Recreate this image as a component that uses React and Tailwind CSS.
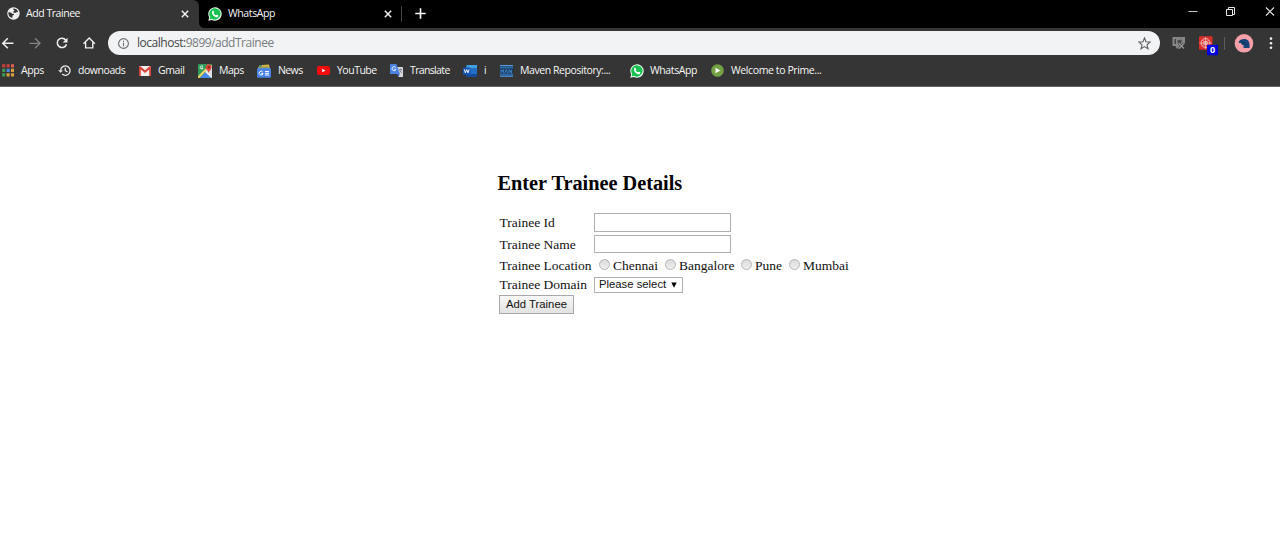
import React from 'react';

function WhatsAppIcon() {
  return (
    <svg className="size-[14px] shrink-0" viewBox="0 0 14 14">
      <path d="M.3 13.8 1.2 10.4A6.7 6.7 0 1 1 3.8 12.9Z" fill="#f2fff4" />
      <path d="M1.6 12.4 2.2 10.1A5.7 5.7 0 1 1 4 11.8Z" fill="#18c250" />
      <path d="M4.6 3.8c.5-.4.9-.2 1.1.4l.4 1c.1.4-.5.8-.5 1 .5 1 1.2 1.6 2.2 2.1.4 0 .8-.8 1.1-.6l1.2.6c.6.3.1 1.5-.5 1.8-1.2.6-2.8-.1-4.1-1.3S3.300 5.200 4.600 3.800Z" fill="#fff" />
    </svg>
  );
}

function GlobeIcon() {
  return (
    <svg className="size-[13px] shrink-0" viewBox="0 0 13 13">
      <circle cx="6.500" cy="6.500" r="6.200" fill="#f1f1f1" />
      <path d="M1.400 5.200c1.800 0 3 .3 3.700 1.500h1.800c.4.900-.2 1.500-1.300 1.700L5.200 11C2.500 10.200 1 8 1.400 5.200ZM6.100 1.500c2.200-.2 4.100 1 5 3-.8.8-1.400.3-1.900.9-.6.7-1.900.1-2.900 0 0-1 .4-1.400 1.100-1.700-.3-1-1.300-1.100-1.300-2.200Z" fill="#353535" />
    </svg>
  );
}

function AppsIcon() {
  const colors = ['#c9403a', '#c9403a', '#d9604f', '#3d9a55', '#4a86e0', '#d7a13a', '#3d9a55', '#d7a13a', '#d7a13a'];
  return (
    <svg className="h-[13px] w-[12px]" viewBox="0 0 12 13">
      {colors.map((c, i) => (
        <rect key={i} x={(i % 3) * 4.4 + 0.2} y={Math.floor(i / 3) * 4.5 + 0.2} width="3.100" height="3.300" fill={c} />
      ))}
    </svg>
  );
}

function HistoryIcon() {
  return (
    <svg className="h-[13px] w-[13px]" viewBox="0 0 13 13" fill="none" stroke="#e8e8e8" strokeWidth="1.300">
      <path d="M2.600 6.500a4.700 4.700 0 1 1 1.500 3.600M7.300 3.700v3l2.200 1.200" />
      <path d="M.2 6.200h4.800L2.600 8.700Z" fill="#e8e8e8" stroke="none" />
    </svg>
  );
}

function GmailIcon() {
  return (
    <svg className="h-[10px] w-[12px]" viewBox="0 0 12 10">
      <rect width="12" height="10" rx=".8" fill="#f3eeee" />
      <path d="M0 10V1c0-.6.5-1 1-1l5 4.300L11 0c.6 0 1 .4 1 1v9h-1.800V3.500L6 6.900 1.800 3.500V10Z" fill="#d8433a" />
    </svg>
  );
}

function MapsIcon() {
  return (
    <svg className="size-[14px]" viewBox="0 0 14 14">
      <rect width="14" height="14" rx="1" fill="#2f9d59" />
      <path d="M8 5.500 14 1v12.500L7 7Z" fill="#dedede" />
      <path d="M2 14 7.500 8l6 6Z" fill="#4a88ee" />
      <path d="M0 12.300 7.500 4.500 9 6 1.400 14H.6Q0 14 0 13.400Z" fill="#f0cf68" />
      <path d="m7.200 7.900.9-.9 5.900 6-.7 1Z" fill="#f5f5f5" />
      <path d="M10.700.3a2.900 2.900 0 0 1 2.900 2.900c0 2.300-2.300 2.900-2.800 6-.5-3.100-3-3.700-3-6A2.900 2.900 0 0 1 10.700.3Z" fill="#dc4638" />
      <circle cx="10.700" cy="3.200" r="1" fill="#7d211c" />
      <path d="M4.900 2.600a1.500 1.500 0 1 0 .2 1.400H3.700" fill="none" stroke="#fff" strokeWidth=".9" />
    </svg>
  );
}

function NewsIcon() {
  return (
    <svg className="h-[14px] w-[14px]" viewBox="0 0 14 14">
      <path d="M2 1h8l-.4 4H2Z" fill="#3b8f5d" />
      <path d="m5 1 7-.6.5 4H4Z" fill="#d6b545" />
      <path d="M1 2.700h12v3H1Z" fill="#8f9b69" />
      <rect x="0" y="4.200" width="14" height="9.600" rx="1" fill="#4a82e8" />
      <path d="M5.700 8A1.900 1.900 0 1 0 6 9.500H4.400M8 7.500h4M8 9.300h4M8 11h4" fill="none" stroke="#fff" strokeWidth="1" />
    </svg>
  );
}

function YouTubeIcon() {
  return (
    <svg className="h-[9px] w-[13px]" viewBox="0 0 12 9" preserveAspectRatio="none">
      <rect width="12" height="9" rx="1.900" fill="#f50b0b" />
      <path d="m4.800 2.700 3.200 1.800-3.200 1.800Z" fill="#fff" />
    </svg>
  );
}

function TranslateIcon() {
  return (
    <svg className="size-[13px]" viewBox="0 0 13 13">
      <path d="M5 3h7.400c.4 0 .6.300.6.600V13H8.500Z" fill="#d7d9dd" />
      <path d="M0 .6C0 .3.300 0 .6 0h5.900l3.300 10H.6a.6.6 0 0 1-.6-.6Z" fill="#4a82e2" />
      <path d="m6.800 10 2.900 0-1.200 3Z" fill="#3260b5" />
      <path d="M5.700 3.500A2 2 0 1 0 6 5.300H4.300" fill="none" stroke="#fff" strokeWidth=".9" />
      <path d="M8.800 5.500H12M10.400 4.600v1M11.500 5.500c-.3 1.500-1 2.400-1.900 3M9.500 6.500l2.300 2.600" fill="none" stroke="#65717d" strokeWidth=".7" />
    </svg>
  );
}

function WordIcon() {
  return (
    <svg className="h-[12px] w-[14px]" viewBox="0 0 14 12">
      <rect x="3.500" width="10.500" height="12" rx=".7" fill="#246fc5" />
      <path d="M3.500 0H14v3H3.500Z" fill="#409fe2" />
      <path d="M3.500 9H14v3H3.500Z" fill="#174a98" />
      <rect y="2.500" width="7.500" height="7.300" rx=".6" fill="#1756b0" />
      <path d="m1.300 4.300 1.100 3.500 1.300-3.200L5 7.800l1.200-3.500" fill="none" stroke="#fff" strokeWidth=".9" />
    </svg>
  );
}

function MavenIcon() {
  return (
    <svg className="h-[12px] w-[13px]" viewBox="0 0 13 12">
      <rect width="13" height="12" fill="#17385e" />
      <path d="M0 .7h13M0 11.100h13" stroke="#5a9add" strokeWidth="1.300" />
      <path d="M0 2.800h13M0 9.100h13" stroke="#3b80c9" strokeWidth="1" />
      <path d="M1 7.900V4.600l1.300 2 1.300-2v3.300M5 7.900l1.300-3.300 1.300 3.300M9 7.900V4.600l2.400 3.300V4.600" fill="none" stroke="#4d91d7" strokeWidth=".8" />
    </svg>
  );
}

function PrimeIcon() {
  return (
    <svg className="size-[13px]" viewBox="0 0 13 13">
      <circle cx="6.500" cy="6.500" r="6.300" fill="#73a143" />
      <path d="m4.500 3.700 5 2.800-5 2.800Z" fill="#fff" />
    </svg>
  );
}

const bookmarks = [
  { label: 'Apps', Icon: AppsIcon, size: 'w-[56px]', slot: 'w-[19px]', font: 'tracking-[-0.39px]' },
  { label: 'downoads', Icon: HistoryIcon, size: 'w-[81px]', slot: 'w-[20px]', font: 'tracking-[-0.45px]' },
  { label: 'Gmail', Icon: GmailIcon, size: 'w-[59px]', slot: 'w-[19px]', font: 'tracking-[-0.39px]' },
  { label: 'Maps', Icon: MapsIcon, size: 'w-[59px]', slot: 'w-[21px]', font: 'tracking-[-0.5px]' },
  { label: 'News', Icon: NewsIcon, size: 'w-[60px]', slot: 'w-[21px]', font: 'tracking-[-0.6px]' },
  { label: 'YouTube', Icon: YouTubeIcon, size: 'w-[73px]', slot: 'w-[20px]', font: 'tracking-[-0.5px]' },
  { label: 'Translate', Icon: TranslateIcon, size: 'w-[73px]', slot: 'w-[20px]', font: 'tracking-[-0.65px]' },
  { label: 'i', Icon: WordIcon, size: 'w-[37px]', slot: 'w-[21px]', font: 'tracking-[-0.39px]' },
  { label: 'Maven Repository:...', Icon: MavenIcon, size: 'w-[130px]', slot: 'w-[20px]', font: 'tracking-[-0.43px]' },
  { label: 'WhatsApp', Icon: WhatsAppIcon, size: 'w-[81px]', slot: 'w-[20px]', font: 'tracking-[-0.39px]' },
  { label: 'Welcome to Prime...', Icon: PrimeIcon, size: 'w-[130px]', slot: 'w-[20px]', font: 'tracking-[-0.39px]' },
];

function CloseIcon() {
  return (
    <svg className="size-[8px] shrink-0" viewBox="0 0 8 8" stroke="#f4f4f4" strokeWidth="1.400">
      <path d="m.8.8 6.400 6.400M7.200.8.8 7.200" />
    </svg>
  );
}

function TabStrip() {
  return (
    <div className="flex h-7 bg-black text-[10.5px] tracking-[-0.45px] text-[#f5f5f5]">
      <div className="flex w-[199px] items-center rounded-tr-[6px] bg-[#353535] pb-px pl-[7px] pr-[10px]">
        <GlobeIcon />
        <span className="ml-[6px] flex-1">Add Trainee</span>
        <CloseIcon />
      </div>
      <svg className="mt-auto size-[6px] shrink-0" viewBox="0 0 6 6">
        <path d="M0 0v6h6Q0 6 0 0Z" fill="#353535" />
      </svg>
      <div className="flex w-[196px] items-center pb-px pl-[3px] pr-[9px]">
        <WhatsAppIcon />
        <span className="ml-[6px] flex-1 tracking-[-0.39px]">WhatsApp</span>
        <CloseIcon />
      </div>
      <div className="mt-[6px] h-4 w-px bg-[#454545]" />
      <svg className="ml-[13px] mt-[8px] size-[11px]" viewBox="0 0 11 11" stroke="#fff" strokeWidth="1.600">
        <path d="M5.500.3v10.400M.3 5.500h10.400" />
      </svg>
      <svg className="ml-auto h-[24px] w-[92px]" viewBox="0 0 92 24" fill="none" stroke="#e8e8e8" strokeWidth="1">
        <path d="M.5 11.500h9" stroke="#c8c8c8" />
        <path d="M38.500 9.500h6v6h-6zM40.500 9.500v-2h6v7h-2" />
        <path d="m78 7.500 8 8M86 7.500l-8 8" strokeWidth="1.100" />
      </svg>
    </div>
  );
}

function Toolbar() {
  return (
    <div className="flex h-[30px] items-center">
      <svg className="h-[30px] w-[108px] shrink-0" viewBox="0 0 108 30" fill="none" stroke="#f0f0f0" strokeWidth="1.500">
        <path d="M13.500 15.300H3M7.800 10.300l-5 5 5 5" />
        <path d="M29.500 15.300H40M35 10.300l5 5-5 5" stroke="#858585" strokeWidth="1.300" />
        <path d="M65.700 12a4.700 4.700 0 1 0 .8 4.200" />
        <path d="M67.500 9.800v4.800h-4.800Z" fill="#f0f0f0" stroke="none" />
        <path d="M83.500 15.700 89.200 10l5.700 5.700M85.600 14.500v5.400h7.200v-5.400" strokeWidth="1.400" />
      </svg>
      <div className="flex h-[24px] w-[1052px] items-center rounded-full bg-[#f1f3f5] pl-[10px] pr-[9px]">
        <svg className="size-[11px]" viewBox="0 0 11 11" fill="none" stroke="#686c70">
          <circle cx="5.500" cy="5.500" r="4.900" strokeWidth="1.100" />
          <path d="M5.500 4.800v3.400M5.500 2.700v1.200" strokeWidth="1.100" />
        </svg>
        <span className="ml-[8px] flex-1 text-[12px] tracking-[-0.48px] text-[#7b7d80]">
          <span className="text-[#45484b]">localhost:</span>9899/addTrainee
        </span>
        <svg className="size-[13px]" viewBox="0 0 13 13" fill="none" stroke="#5d6165" strokeWidth="1.100">
          <path d="m6.500 1 1.500 3.800 4.100.3L9 7.800l1 4-3.500-2.200L3 11.800l1-4L.9 5.100 5 4.800Z" />
        </svg>
      </div>
      <svg className="h-[30px] w-[60px]" viewBox="0 0 60 30">
        <path d="M12.500 9h12.500v6.500l-4 1v4h-4.500l-1-2.500h-3Z" fill="#858585" />
        <path d="M14.500 11h1.500v5h-1.500zM17.500 12.500l4-1v3l-4 1z" fill="#454545" />
        <path d="m19 15.500 5 5M24 15.500l-5 5" stroke="#353535" strokeWidth="2.400" />
        <path d="m19 15.500 5 5M24 15.500l-5 5" stroke="#999" strokeWidth="1.200" />
        <rect x="39" y="8.300" width="13.500" height="13.500" rx="1" fill="#d92d2a" />
        <g fill="none" stroke="#f3c9c7" strokeWidth=".9">
          <circle cx="45.500" cy="15" r="4.400" />
          <circle cx="45.500" cy="15" r="1.800" />
          <path d="M45.500 9v12M39.500 15h12M42.500 12l6 6M48.500 12l-6 6" strokeWidth=".7" />
        </g>
        <rect x="47" y="16.800" width="11" height="10.500" rx="1" fill="#0000df" />
        <text x="52.500" y="25.200" textAnchor="middle" fill="#fff" fontSize="9" fontWeight="700" fontFamily="Open Sans">0</text>
      </svg>
      <div className="ml-[4px] h-[13px] w-px bg-[#5d5d5d]" />
      <svg className="ml-[9px] h-[30px] w-[46px]" viewBox="0 0 46 30">
        <circle cx="10" cy="15.300" r="9.300" fill="#f4a0a8" />
        <path d="M4.700 14.700c.2-2 1.500-3.300 3.300-3.200 1.700-.9 5-.5 6.300 1.300 1.200 1.600 1.400 4.100 1.200 7.200H9.500v-3c-1 .2-2-.4-2.300-1.500l-.2-.6H4.700Z" fill="#164477" />
        <path d="M8.200 13.500c.6 2.300 2.500 2.700 3.800 1" fill="none" stroke="#092846" strokeWidth=".8" />
        <g fill="#f2f2f2">
          <circle cx="37" cy="10.600" r="1.300" />
          <circle cx="37" cy="15.200" r="1.300" />
          <circle cx="37" cy="19.800" r="1.300" />
        </g>
      </svg>
    </div>
  );
}

function BrowserChrome() {
  return (
    <header className="h-[87px] border-b border-[#626262] bg-[#353535] font-['Open_Sans',sans-serif]">
      <TabStrip />
      <Toolbar />
      <nav className="flex h-[25px] items-center pl-[2px] text-[10.5px] text-[#f5f5f5]">
        {bookmarks.map(({ label, Icon, size, slot, font }) => (
          <div key={label} className={`flex shrink-0 items-center ${size}`}>
            <span className={`shrink-0 ${slot}`}>
              <Icon />
            </span>
            <span className={`whitespace-nowrap ${font}`}>{label}</span>
          </div>
        ))}
      </nav>
    </header>
  );
}

function RadioOption({ label, size }) {
  return (
    <label className={`flex shrink-0 items-center ${size}`}>
      <input
        type="radio"
        name="location"
        className="mb-px mr-[3px] size-[11px] shrink-0 appearance-none rounded-full border border-[#b5b5b5] bg-linear-to-b from-[#dcdcdc] to-[#efefef]"
      />
      <span className="pt-[2px]">{label}</span>
    </label>
  );
}

export default function App() {
  return (
    <div className="h-[541px] overflow-hidden bg-white text-black">
      <BrowserChrome />
      <main className="pl-[497px] pt-[84px] font-['Liberation_Serif',serif] text-[13.5px] leading-4 text-[#111]">
        <h2 className="pl-[0.5px] text-[20.3px] font-bold leading-6 text-black">Enter Trainee Details</h2>
        <form className="mt-4">
          <div className="flex h-[22px] items-center pl-[2.5px]">
            <label className="w-[94.5px] pt-[2px]">Trainee Id</label>
            <input className="h-[19px] w-[137px] border border-[#b0b0b0]" />
          </div>
          <div className="flex h-[21px] items-center pl-[2.5px]">
            <label className="w-[94.5px] pt-[2px]">Trainee Name</label>
            <input className="mt-px h-[18px] w-[137px] border border-[#b0b0b0]" />
          </div>
          <div className="flex h-[21px] items-center pl-[2.5px]">
            <span className="w-[99.5px] pt-[2px]">Trainee Location</span>
            <RadioOption label="Chennai" size="w-[66px]" />
            <RadioOption label="Bangalore" size="w-[76px]" />
            <RadioOption label="Pune" size="w-[48px]" />
            <RadioOption label="Mumbai" size="w-[66px]" />
          </div>
          <div className="flex h-[18px] items-center pl-[2.5px]">
            <span className="w-[94.5px] pt-[2px]">Trainee Domain</span>
            <button type="button" className="mt-px flex h-4 w-[89px] items-center border border-[#b0b0b0] pl-[4px] font-['Liberation_Sans',sans-serif] text-[11.3px] leading-none">
              <span className="flex-1 text-left whitespace-nowrap">Please select</span>
              <svg className="mr-[5px] h-[6px] w-[6px]" viewBox="0 0 6 6">
                <path d="M.3.500h5.400L3 5.800Z" />
              </svg>
            </button>
          </div>
          <button type="button" className="ml-[2px] mt-[2px] flex h-[19px] w-[75px] items-center justify-center border border-[#a8a8a8] bg-linear-to-b from-[#f8f8f8] to-[#e2e2e2] pb-px font-['Liberation_Sans',sans-serif] text-[11.3px] whitespace-nowrap">
            Add Trainee
          </button>
        </form>
      </main>
    </div>
  );
}
